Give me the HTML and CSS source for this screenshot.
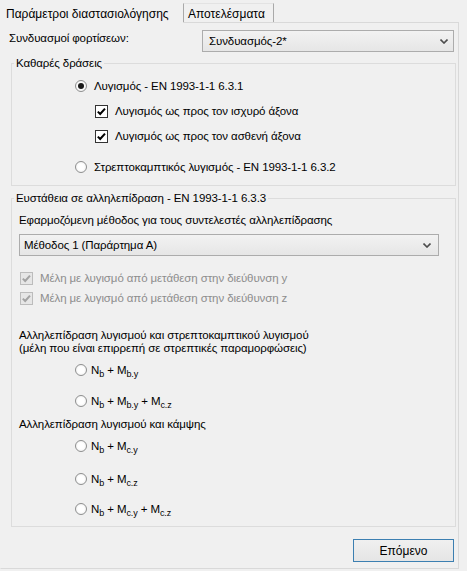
FILE: index.html
```html
<!DOCTYPE html>
<html lang="el">
<head>
    <meta charset="UTF-8">
    <title>Παράμετροι διαστασιολόγησης</title>
    <link rel="stylesheet" href="styles.css">
</head>
<body>

<div class="window">
    <!-- Καρτέλες -->
    <div class="tabs">
        <div class="tab active">Παράμετροι διαστασιολόγησης</div>
        <div class="tab">Αποτελέσματα</div>
    </div>

    <div class="page">
        <div class="combo-row">
            <span class="combo-label">Συνδυασμοί φορτίσεων:</span>
            <div class="combo combo-wide">
                <span>Συνδυασμός-2*</span>
                <svg class="chevron" width="8" height="5" viewBox="0 0 8 5"><path d="M0.5 0.5 L4 4 L7.5 0.5" fill="none" stroke="#4d4d4d" stroke-width="1.6"/></svg>
            </div>
        </div>

        <!-- Καθαρές δράσεις -->
        <fieldset class="group group-first">
            <legend>Καθαρές δράσεις</legend>
            <div class="row indent-radio r1">
                <span class="radio checked"></span>
                <span class="text-radio">Λυγισμός - EN 1993-1-1 6.3.1</span>
            </div>
            <div class="row indent-check r2">
                <span class="check"><svg width="13" height="13" viewBox="0 0 13 13"><path d="M2.8 6.6 L5.2 9 L10 3.6" fill="none" stroke="#000" stroke-width="2"/></svg></span>
                <span class="text-check">Λυγισμός ως προς τον ισχυρό άξονα</span>
            </div>
            <div class="row indent-check r3">
                <span class="check"><svg width="13" height="13" viewBox="0 0 13 13"><path d="M2.8 6.6 L5.2 9 L10 3.6" fill="none" stroke="#000" stroke-width="2"/></svg></span>
                <span class="text-check">Λυγισμός ως προς τον ασθενή άξονα</span>
            </div>
            <div class="row indent-radio r4">
                <span class="radio"></span>
                <span class="text-radio">Στρεπτοκαμπτικός λυγισμός - EN 1993-1-1 6.3.2</span>
            </div>
        </fieldset>

        <!-- Ευστάθεια σε αλληλεπίδραση -->
        <fieldset class="group group-second">
            <legend>Ευστάθεια σε αλληλεπίδραση - EN 1993-1-1 6.3.3</legend>
            <div class="row inner m5">Εφαρμοζόμενη μέθοδος για τους συντελεστές αλληλεπίδρασης</div>
            <div class="combo combo-method">
                <span>Μέθοδος 1 (Παράρτημα Α)</span>
                <svg class="chevron" width="8" height="5" viewBox="0 0 8 5"><path d="M0.5 0.5 L4 4 L7.5 0.5" fill="none" stroke="#4d4d4d" stroke-width="1.6"/></svg>
            </div>
            <div class="row inner disabled m12">
                <span class="check"><svg width="13" height="13" viewBox="0 0 13 13"><path d="M2.8 6.6 L5.2 9 L10 3.6" fill="none" stroke="#a3a3a3" stroke-width="2"/></svg></span>
                <span class="text-check">Μέλη με λυγισμό από μετάθεση στην διεύθυνση y</span>
            </div>
            <div class="row inner disabled">
                <span class="check"><svg width="13" height="13" viewBox="0 0 13 13"><path d="M2.8 6.6 L5.2 9 L10 3.6" fill="none" stroke="#a3a3a3" stroke-width="2"/></svg></span>
                <span class="text-check">Μέλη με λυγισμό από μετάθεση στην διεύθυνση z</span>
            </div>
            <p class="note">Αλληλεπίδραση λυγισμού και στρεπτοκαμπτικού λυγισμού<br>(μέλη που είναι επιρρεπή σε στρεπτικές παραμορφώσεις)</p>
            <div class="row indent-radio m5">
                <span class="radio"></span>
                <span class="text-formula">N<sub>b</sub> + M<sub>b.y</sub></span>
            </div>
            <div class="row indent-radio m11">
                <span class="radio"></span>
                <span class="text-formula">N<sub>b</sub> + M<sub>b.y</sub> + M<sub>c.z</sub></span>
            </div>
            <div class="row inner m3">Αλληλεπίδραση λυγισμού και κάμψης</div>
            <div class="row indent-radio m2">
                <span class="radio"></span>
                <span class="text-formula">N<sub>b</sub> + M<sub>c.y</sub></span>
            </div>
            <div class="row indent-radio m13">
                <span class="radio"></span>
                <span class="text-formula">N<sub>b</sub> + M<sub>c.z</sub></span>
            </div>
            <div class="row indent-radio m10">
                <span class="radio"></span>
                <span class="text-formula">N<sub>b</sub> + M<sub>c.y</sub> + M<sub>c.z</sub></span>
            </div>
        </fieldset>

        <div class="actions">
            <button class="btn-next">Επόμενο</button>
        </div>
    </div>
</div>

</body>
</html>
```

FILE: styles.css
```css
body {
    margin: 0;
    background-color: #f0f0f0;
    font-family: 'Liberation Sans', Arial, sans-serif;
    font-size: 11.5px;
    letter-spacing: -0.1px;
    color: #000;
}
.window {
    width: 467px;
    height: 571px;
}

/* καρτέλες */
.tabs {
    display: flex;
    align-items: flex-end;
    height: 22px;
    font-size: 12px;
    letter-spacing: 0;
}
.tab {
    box-sizing: border-box;
    height: 19px;
    padding: 3px 0 0 4px;
    line-height: 15px;
    width: 91px;
    border-left: 1px solid #a9a9a9;
    border-right: 1px solid #a9a9a9;
    border-top: 1px solid #e3e3e3;
}
.tab.active {
    width: 183px;
    height: 23px;
    margin-bottom: -1px;
    padding: 7px 0 0 6px;
    border: none;
    background-color: #f0f0f0;
    position: relative;
}
.page {
    box-sizing: border-box;
    width: 459px;
    height: 547px;
    border: 1px solid #d9d9d9;
    border-left-color: #f0f0f0;
    padding: 0 2px 0 10px;
}

/* συνδυασμοί */
.combo-row {
    display: flex;
    align-items: flex-start;
    margin: 7px 0 0 -2px;
}
.combo-label {
    width: 193px;
    padding-top: 1px;
    line-height: 15px;
}
.combo {
    box-sizing: border-box;
    height: 22px;
    display: flex;
    align-items: center;
    justify-content: space-between;
    border: 1px solid #acacac;
    background: linear-gradient(#f2f2f2, #e6e6e6);
    padding: 0 5px 0 6px;
}
.combo-wide {
    width: 252px;
}
.combo-method {
    width: 420px;
    margin: 4px 0 0 7px;
    padding-left: 4px;
    padding-right: 7px;
}
.chevron {
    display: block;
}

/* ομάδες */
.group {
    margin: 4px 0 0;
    padding: 0 0 8px;
    border: 1px solid #dcdcdc;
    min-width: 0;
}
.group-second {
    margin-top: 5px;
    padding-bottom: 7px;
}
.group legend {
    margin-left: 2px;
    padding: 0 2px;
    line-height: 14px;
}
.row {
    display: flex;
    align-items: center;
    height: 20px;
}
.indent-radio {
    padding-left: 63px;
}
.indent-check {
    padding-left: 83px;
}
.inner {
    padding-left: 7px;
}
.r1 { margin-top: 6px; }
.r2 { margin-top: 5px; }
.r3 { margin-top: 5px; }
.r4 { margin-top: 11px; }
.m2 { margin-top: 2px; }
.m3 { margin-top: 3px; }
.m5 { margin-top: 5px; }
.m10 { margin-top: 10px; }
.m11 { margin-top: 11px; }
.m12 { margin-top: 12px; }
.m13 { margin-top: 13px; }

.note {
    margin: 21px 0 0;
    padding-left: 7px;
    line-height: 13px;
}

/* κουμπιά επιλογής */
.radio {
    box-sizing: border-box;
    width: 12px;
    height: 12px;
    border: 1px solid #8e8f8f;
    border-radius: 50%;
    background: radial-gradient(#ffffff 40%, #e9e9e9);
    display: flex;
    align-items: center;
    justify-content: center;
    flex-shrink: 0;
}
.radio.checked::after {
    content: "";
    width: 6px;
    height: 6px;
    border-radius: 50%;
    background-color: #1a1a1a;
}
.text-radio {
    margin-left: 7px;
}
.text-formula {
    margin-left: 4px;
}
.text-formula sub {
    font-size: 9px;
    vertical-align: -3px;
    line-height: 0;
}
.check {
    box-sizing: border-box;
    width: 13px;
    height: 13px;
    border: 1px solid #333;
    background-color: #fff;
    flex-shrink: 0;
}
.check svg {
    display: block;
    margin: -1px;
}
.text-check {
    margin-left: 7px;
}
.disabled {
    color: #8d8d8d;
}
.disabled .check {
    border-color: #bcbcbc;
    background-color: #e6e6e6;
    margin-left: 1px;
}

/* επόμενο */
.actions {
    display: flex;
    justify-content: flex-end;
    margin: 12px 2px 0 0;
}
.btn-next {
    width: 101px;
    height: 23px;
    border: 1px solid #3c7fb1;
    background: linear-gradient(#f0f0f0, #e5e5e5);
    font-family: 'Liberation Sans', Arial, sans-serif;
    font-size: 12px;
    color: #000;
    padding: 0;
}
```
